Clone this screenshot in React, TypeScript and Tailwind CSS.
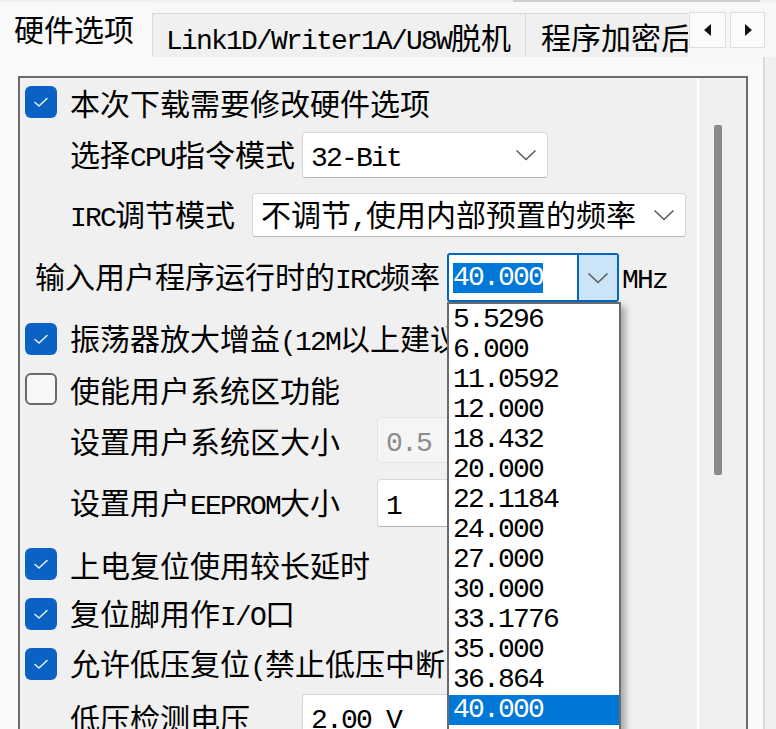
import React from "react";

type Kids = { children?: React.ReactNode };

// Half-width Latin run, set to the same advance as the dialog's bitmap font
const Latin = ({ children }: Kids) => (
  <span className="font-['Liberation_Mono',monospace] text-[28px] tracking-[-1.8px]">{children}</span>
);

const Chevron = () => (
  <svg width="22" height="12" viewBox="0 0 22 12" className="shrink-0">
    <polyline points="1.5,1.5 11,10.5 20.5,1.5" fill="none" stroke="#5b5b5b" strokeWidth="1.6" />
  </svg>
);

const Box = ({ checked }: { checked: boolean }) =>
  checked ? (
    <span className="w-[32px] h-[32px] rounded-[6px] bg-[#0a62c4] flex items-center justify-center shrink-0">
      <svg width="16" height="12" viewBox="0 0 16 12">
        <polyline
          points="2,6.5 6,10 14,2.5"
          fill="none"
          stroke="#e6eefa"
          strokeWidth="1.6"
          strokeLinecap="round"
          strokeLinejoin="round"
        />
      </svg>
    </span>
  ) : (
    <span className="w-[32px] h-[32px] rounded-[6px] border-2 border-[#6a6a6a] bg-[#f7f7f7] shrink-0" />
  );

const CheckRow = ({ checked, h, children }: Kids & { checked: boolean; h: string }) => (
  <div className={`flex items-center pl-[5px] shrink-0 ${h}`}>
    <Box checked={checked} />
    <span className="ml-[13px] whitespace-nowrap">{children}</span>
  </div>
);

const Combo = ({
  w,
  h,
  disabled,
  children,
}: Kids & { w: string; h: string; disabled?: boolean }) => (
  <div
    className={`${w} ${h} shrink-0 flex items-center justify-between rounded-[4px] border pl-[8px] pr-[10px] ${
      disabled
        ? "bg-[#f5f5f5] border-[#e4e4e4] text-[#8c8c8c]"
        : "bg-white border-[#d8d8d8] border-b-[#b8b8b8]"
    }`}
  >
    <span className="whitespace-nowrap">{children}</span>
    <Chevron />
  </div>
);

const freqs = [
  "5.5296",
  "6.000",
  "11.0592",
  "12.000",
  "18.432",
  "20.000",
  "22.1184",
  "24.000",
  "27.000",
  "30.000",
  "33.1776",
  "35.000",
  "36.864",
  "40.000",
  "44.2368",
  "45.000",
];

export default function App() {
  return (
    <div className="w-[776px] h-[729px] overflow-hidden bg-[#f0f0f0] text-black text-[30px] leading-none font-['Noto_Sans_CJK_SC','Noto_Sans',sans-serif]">
      {/* edge of the control above */}
      <div className="h-[2px] ml-[513px] w-[247px] bg-[#cfcfcf]" />

      {/* tab strip */}
      <div className="h-[55px] flex items-start bg-[#f7f7f7]">
        <div className="w-[688px] h-full flex items-end overflow-hidden">
          <div className="w-[152px] h-[50px] shrink-0 bg-[#f9f9f9] pt-[6px] pl-[14px] whitespace-nowrap">
            硬件选项
          </div>
          <div className="w-[373px] h-[44px] shrink-0 bg-[#f0f0f0] border-l border-t border-[#d9d9d9] pt-[7px] pl-[13px] whitespace-nowrap">
            <Latin>Link1D/Writer1A/U8W</Latin>脱机
          </div>
          <div className="w-[200px] h-[44px] shrink-0 bg-[#f0f0f0] border-l border-t border-[#d9d9d9] pt-[7px] pl-[15px] whitespace-nowrap">
            程序加密后
          </div>
        </div>
        <div className="mt-[10px] ml-[1px] flex gap-[4px]">
          <div className="w-[37px] h-[36px] bg-[#fbfbfb] border border-[#dedede] flex items-center justify-center">
            <svg width="8" height="12" viewBox="0 0 8 12">
              <polygon points="7,0 7,12 0,6" fill="#111" />
            </svg>
          </div>
          <div className="w-[35px] h-[36px] bg-[#fbfbfb] border border-[#dedede] flex items-center justify-center">
            <svg width="8" height="12" viewBox="0 0 8 12">
              <polygon points="1,0 1,12 8,6" fill="#111" />
            </svg>
          </div>
        </div>
      </div>

      {/* tab page */}
      <div className="w-[765px] h-[672px] bg-[#f9f9f9] border-r-2 border-[#dadada] pt-[19px] pl-[18px]">
        <div className="w-[730px] h-[660px] border-2 border-b-0 border-[#6b6b6b] bg-[#f0f0f0] flex">
          {/* options */}
          <div className="flex-1 flex flex-col relative">
            <CheckRow checked h="h-[47px]">
              本次下载需要修改硬件选项
            </CheckRow>

            <div className="h-[60px] flex items-center pl-[50px] shrink-0">
              <span className="w-[232px] shrink-0 whitespace-nowrap">
                选择<Latin>CPU</Latin>指令模式
              </span>
              <Combo w="w-[246px]" h="h-[46px]">
                <Latin>32-Bit</Latin>
              </Combo>
            </div>

            <div className="h-[60px] flex items-center pl-[50px] shrink-0">
              <span className="w-[182px] shrink-0 whitespace-nowrap">
                <Latin>IRC</Latin>调节模式
              </span>
              <Combo w="w-[434px]" h="h-[44px]">
                不调节<Latin>,</Latin>使用内部预置的频率
              </Combo>
            </div>

            <div className="h-[65px] flex items-center pl-[15px] shrink-0">
              <span className="w-[412px] shrink-0 whitespace-nowrap">
                输入用户程序运行时的<Latin>IRC</Latin>频率
              </span>
              <div className="relative z-10 w-[172px] h-[49px] shrink-0 flex border-2 border-[#0067c0] rounded-[3px] bg-white">
                <div className="flex-1 flex items-center pl-[4px]">
                  <span className="h-[30px] flex items-center bg-[#0078d7] text-white">
                    <Latin>40.000</Latin>
                  </span>
                </div>
                <div className="w-[40px] bg-[#cce4f7] border-l-2 border-[#0067c0] flex items-center justify-center">
                  <Chevron />
                </div>
                {/* open drop-down list */}
                <div className="absolute left-[-2px] top-[47px] w-[174px] bg-white border-2 border-[#6b6b6b] shadow-[5px_4px_6px_rgba(0,0,0,0.28)] pt-[1px]">
                  {freqs.map((f) => (
                    <div
                      key={f}
                      className={`h-[30px] flex items-center pl-[4px] ${
                        f === "40.000" ? "bg-[#0078d7] text-white" : ""
                      }`}
                    >
                      <Latin>{f}</Latin>
                    </div>
                  ))}
                </div>
              </div>
              <span className="ml-[3px] whitespace-nowrap">
                <Latin>MHz</Latin>
              </span>
            </div>

            <CheckRow checked h="h-[58px]">
              振荡器放大增益<Latin>(12M</Latin>以上建议选择<Latin>)</Latin>
            </CheckRow>
            <CheckRow checked={false} h="h-[42px]">
              使能用户系统区功能
            </CheckRow>

            <div className="h-[60px] flex items-center pl-[50px] shrink-0">
              <span className="w-[307px] shrink-0 whitespace-nowrap">设置用户系统区大小</span>
              <Combo w="w-[150px]" h="h-[46px]" disabled>
                <Latin>0.5</Latin>
              </Combo>
            </div>

            <div className="h-[66px] flex items-center pl-[50px] shrink-0">
              <span className="w-[307px] shrink-0 whitespace-nowrap">
                设置用户<Latin>EEPROM</Latin>大小
              </span>
              <Combo w="w-[150px]" h="h-[48px]">
                <Latin>1</Latin>
              </Combo>
            </div>

            <CheckRow checked h="h-[56px]">
              上电复位使用较长延时
            </CheckRow>
            <CheckRow checked h="h-[44px]">
              复位脚用作<Latin>I/O</Latin>口
            </CheckRow>
            <CheckRow checked h="h-[56px]">
              允许低压复位<Latin>(</Latin>禁止低压中断<Latin>)</Latin>
            </CheckRow>

            <div className="h-[50px] flex items-center pl-[50px] shrink-0">
              <span className="w-[232px] shrink-0 whitespace-nowrap">低压检测电压</span>
              <Combo w="w-[200px]" h="h-[46px]">
                <Latin>2.00 V</Latin>
              </Combo>
            </div>
          </div>

          {/* vertical scroll bar */}
          <div className="w-[49px] shrink-0 border-l-2 border-white">
            <div className="ml-[15px] mt-[47px] w-[8px] h-[350px] rounded-[2px] bg-[#8a8a8a]" />
          </div>
        </div>
      </div>
    </div>
  );
}
